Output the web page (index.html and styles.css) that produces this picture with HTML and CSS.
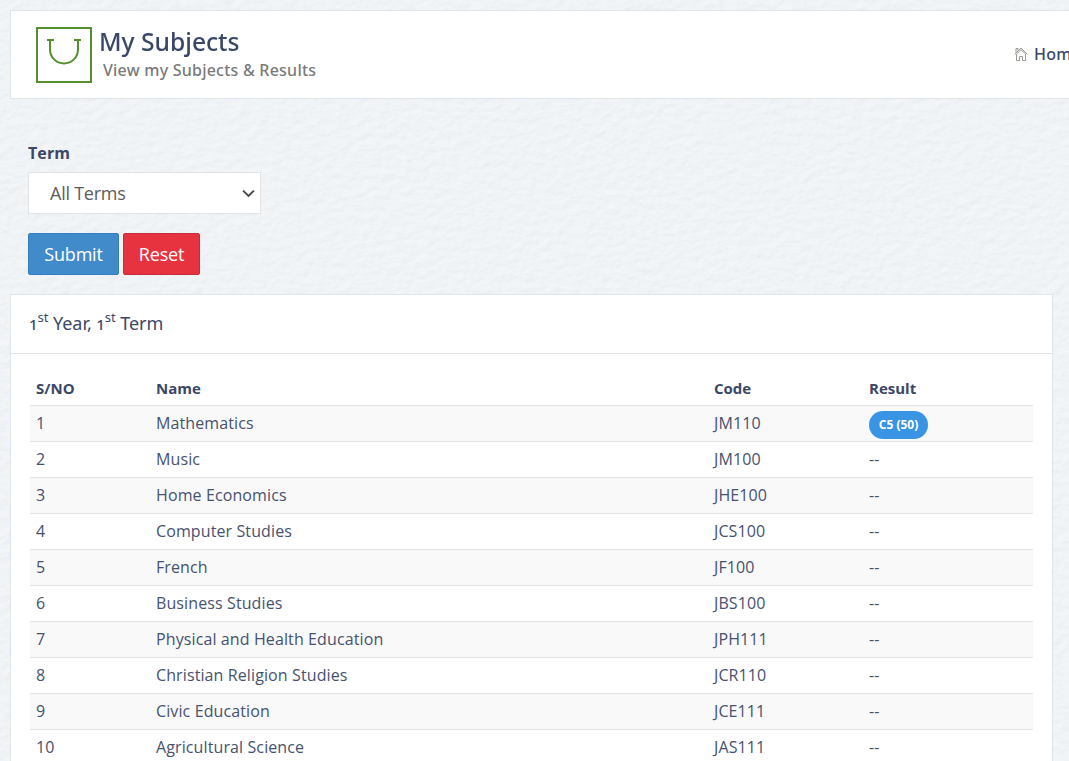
FILE: index.html
```html
<!DOCTYPE html>
<html lang="en">
<head>
<meta charset="utf-8">
<title>My Subjects</title>
<link rel="stylesheet" href="styles.css">
</head>
<body>
<svg class="paper" aria-hidden="true">
  <filter id="grain" x="0" y="0" width="100%" height="100%" color-interpolation-filters="sRGB">
    <feTurbulence type="fractalNoise" baseFrequency="0.09 0.14" numOctaves="3" seed="4" result="noise"/>
    <feDiffuseLighting in="noise" lighting-color="#f0f2f4" surfaceScale="0.9" diffuseConstant="1.133">
      <feDistantLight azimuth="235" elevation="62"/>
    </feDiffuseLighting>
  </filter>
  <rect width="100%" height="100%" filter="url(#grain)"/>
</svg>
<header class="page-header">
  <svg class="logo" viewBox="0 0 56 56" fill="none" stroke="#548f2e" stroke-width="2">
    <rect x="1" y="1" width="54" height="54"/>
    <path d="M11 13h7M38 13h7M14 13v9.500a14 14 0 0 0 28 0V13"/>
  </svg>
  <div class="titles">
    <h1>My Subjects</h1>
    <p>View my Subjects &amp; Results</p>
  </div>
  <a class="home"><svg viewBox="0 0 14 14" fill="none" stroke="#9b9792" stroke-width="1"><path d="M.7 7.300 7 1l6.300 6.300M2 5.500v-4h2v2M2.500 7v6.500h3v-4h3v4h3V7L7 2.800z"/></svg>Home</a>
</header>
<form class="filter">
  <label for="term">Term</label>
  <div class="select" id="term"><span>All Terms</span><svg viewBox="0 0 12 8" fill="none" stroke="#484848" stroke-width="1.800"><path d="m1 1.300 5 5 5-5"/></svg></div>
  <div class="buttons"><button type="button" class="submit">Submit</button><button type="button" class="reset">Reset</button></div>
</form>
<main class="panel">
  <h2><span class="num">1</span><sup>st</sup> Year, <span class="num">1</span><sup>st</sup> Term</h2>
  <div class="panel-body">
    <table>
      <colgroup><col class="c1"><col class="c2"><col class="c3"><col></colgroup>
      <thead><tr><th>S/NO</th><th>Name</th><th>Code</th><th>Result</th></tr></thead>
      <tbody>
        <tr><td>1</td><td>Mathematics</td><td>JM110</td><td><span class="badge">C5 (50)</span></td></tr>
        <tr><td>2</td><td>Music</td><td>JM100</td><td>--</td></tr>
        <tr><td>3</td><td>Home Economics</td><td>JHE100</td><td>--</td></tr>
        <tr><td>4</td><td>Computer Studies</td><td>JCS100</td><td>--</td></tr>
        <tr><td>5</td><td>French</td><td>JF100</td><td>--</td></tr>
        <tr><td>6</td><td>Business Studies</td><td>JBS100</td><td>--</td></tr>
        <tr><td>7</td><td>Physical and Health Education</td><td>JPH111</td><td>--</td></tr>
        <tr><td>8</td><td>Christian Religion Studies</td><td>JCR110</td><td>--</td></tr>
        <tr><td>9</td><td>Civic Education</td><td>JCE111</td><td>--</td></tr>
        <tr><td>10</td><td>Agricultural Science</td><td>JAS111</td><td>--</td></tr>
      </tbody>
    </table>
  </div>
</main>
</body>
</html>
```
FILE: styles.css
```css
* { box-sizing: border-box; }
html { height: 761px; overflow: hidden; }
body { margin: 0; height: 761px; padding: 10px 0 0 10px; overflow: hidden; position: relative; z-index: 0; background: #f1f4f6; color: #3a4767; font-family: "Open Sans", sans-serif; font-size: 16px; }
.paper { position: absolute; inset: 0; width: 100%; height: 100%; z-index: -1; opacity: .15; }
.page-header { width: 1100px; height: 89px; padding: 16px 0 0 25px; display: flex; align-items: flex-start; background: #fff; border: 1px solid #e0e4ed; }
.logo { width: 56px; height: 56px; flex: none; }
.titles { padding-left: 7px; width: 922px; flex: none; }
h1 { margin: -3px 0 0; font: 500 26px/34px "Noto Sans", sans-serif; transform: scaleX(.947); transform-origin: 0 0; }
.titles p { margin: 1px 0 0 4px; font: 500 16px/23px "Noto Sans", sans-serif; letter-spacing: .23px; color: #7a7a7a; white-space: nowrap; }
.home { display: flex; align-items: center; gap: 6px; font: 500 16px/22px "Noto Sans", sans-serif; padding-top: 16px; letter-spacing: .2px; }
.home svg { width: 14px; height: 14px; margin-top: -1px; }
.filter { height: 195px; padding: 43px 0 0 18px; display: flex; flex-direction: column; }
label { font: 700 16px/22px "Open Sans", sans-serif; letter-spacing: .1px; }
.select { width: 233px; height: 42px; margin-top: 8px; padding: 0 5px 0 21px; display: flex; align-items: center; justify-content: space-between; background: #fff; border: 1px solid #e1e3e5; color: #5c5c5c; font-size: 18px; font-weight: 400; letter-spacing: -.25px; }
.select svg { width: 13px; height: 9px; }
.buttons { display: flex; gap: 4px; margin-top: 19px; }
button { height: 42px; padding: 0; border: 1px solid; border-radius: 2px; color: #fff; font: 400 18px "Open Sans", sans-serif; letter-spacing: -.2px; }
.submit { width: 91px; background: #428bca; border-color: #357ebd; }
.reset { width: 77px; background: #e6333f; border-color: #c52d3b; }
.panel { width: 1043px; height: 480px; background: #fff; border: 1px solid #e0e4ed; }
h2 { margin: 0; height: 59px; padding: 16px 0 0 18px; border-bottom: 1px solid #e1e4e8; font: 400 18px/24px "Noto Sans", sans-serif; letter-spacing: -.05px; }
.num { font-size: 15px; font-weight: 500; }
sup { font-size: 13px; line-height: 0; vertical-align: 8px; }
.panel-body { padding: 17px 19px 0; }
table { width: 1003px; table-layout: fixed; border-collapse: collapse; }
.c1 { width: 120px; } .c2 { width: 558px; } .c3 { width: 155px; }
th { height: 34px; padding: 0 6px; text-align: left; font-size: 15px; font-weight: 700; }
td { height: 36px; padding: 0 6px; border-top: 1px solid #e1e3e5; color: #46526f; font-weight: 400; line-height: 22px; letter-spacing: .11px; white-space: nowrap; }
tbody tr:nth-child(odd) { background: #f9f9f9; }
.badge { display: flex; width: 59px; height: 28px; margin-top: 3px; align-items: center; justify-content: center; border-radius: 14px; background: #3994e4; color: #fff; font-size: 12px; font-weight: 700; letter-spacing: 0; }
```
